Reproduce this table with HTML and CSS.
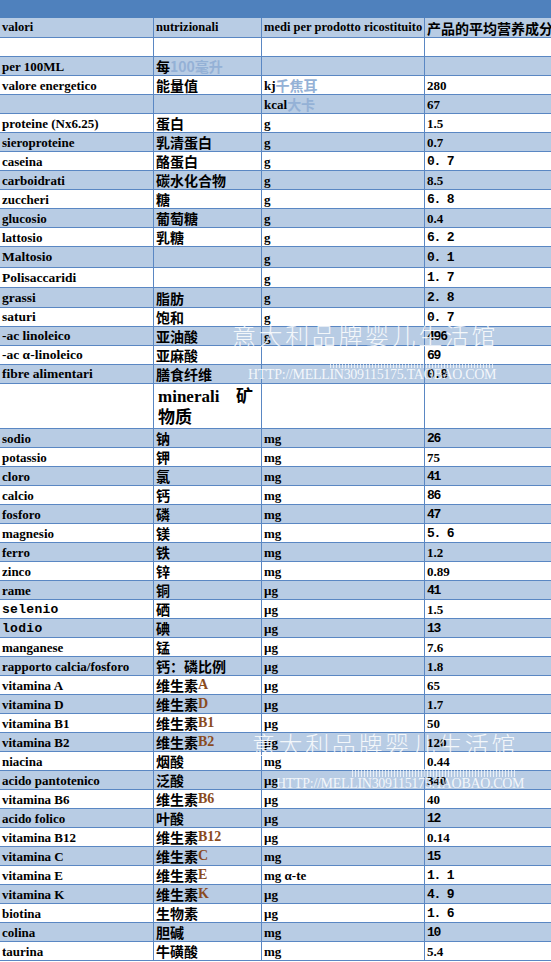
FILE: index.html
```html
<!DOCTYPE html>
<html lang="it">
<head>
<meta charset="utf-8">
<title>valori nutrizionali</title>
<link rel="stylesheet" href="styles.css">
</head>
<body>
<div class="sheet">
  <div class="band"></div>
  <div class="table">
    <div class="row blue head"><div class="c">valori</div><div class="c">nutrizionali</div><div class="c">medi per prodotto ricostituito</div><div class="c zh">产品的平均营养成分</div></div>
    <div class="row"><div class="c"></div><div class="c"></div><div class="c"></div><div class="c"></div></div>
    <div class="row blue"><div class="c">per 100ML</div><div class="c zh">每<span class="pale">100毫升</span></div><div class="c"></div><div class="c"></div></div>
    <div class="row"><div class="c">valore energetico</div><div class="c zh">能量值</div><div class="c">kj<span class="pale zh">千焦耳</span></div><div class="c">280</div></div>
    <div class="row blue"><div class="c"></div><div class="c"></div><div class="c">kcal<span class="pale zh">大卡</span></div><div class="c">67</div></div>
    <div class="row"><div class="c">proteine (Nx6.25)</div><div class="c zh">蛋白</div><div class="c">g</div><div class="c">1.5</div></div>
    <div class="row blue"><div class="c">sieroproteine</div><div class="c zh">乳清蛋白</div><div class="c">g</div><div class="c">0.7</div></div>
    <div class="row"><div class="c">caseina</div><div class="c zh">酪蛋白</div><div class="c">g</div><div class="c mono">0. 7</div></div>
    <div class="row blue"><div class="c">carboidrati</div><div class="c zh">碳水化合物</div><div class="c">g</div><div class="c">8.5</div></div>
    <div class="row"><div class="c">zuccheri</div><div class="c zh">糖</div><div class="c">g</div><div class="c mono">6. 8</div></div>
    <div class="row blue"><div class="c">glucosio</div><div class="c zh">葡萄糖</div><div class="c">g</div><div class="c">0.4</div></div>
    <div class="row"><div class="c">lattosio</div><div class="c zh">乳糖</div><div class="c">g</div><div class="c mono">6. 2</div></div>
    <div class="row blue h21"><div class="c big">Maltosio</div><div class="c"></div><div class="c low">g</div><div class="c mono">0. 1</div></div>
    <div class="row h20"><div class="c big">Polisaccaridi</div><div class="c"></div><div class="c low">g</div><div class="c mono">1. 7</div></div>
    <div class="row blue h20"><div class="c big">grassi</div><div class="c zh">脂肪</div><div class="c">g</div><div class="c mono">2. 8</div></div>
    <div class="row"><div class="c big">saturi</div><div class="c zh">饱和</div><div class="c">g</div><div class="c mono">0. 7</div></div>
    <div class="row blue"><div class="c big">-ac linoleico</div><div class="c zh">亚油酸</div><div class="c">g</div><div class="c mono">496</div></div>
    <div class="row"><div class="c big">-ac α-linoleico</div><div class="c zh">亚麻酸</div><div class="c"></div><div class="c mono">69</div></div>
    <div class="row blue"><div class="c big">fibre alimentari</div><div class="c zh">膳食纤维</div><div class="c"></div><div class="c mono">0.8</div></div>
    <div class="row h45"><div class="c"></div><div class="c minerali">minerali 矿物质</div><div class="c"></div><div class="c"></div></div>
    <div class="row blue"><div class="c">sodio</div><div class="c zh">钠</div><div class="c">mg</div><div class="c mono">26</div></div>
    <div class="row"><div class="c">potassio</div><div class="c zh">钾</div><div class="c">mg</div><div class="c">75</div></div>
    <div class="row blue"><div class="c">cloro</div><div class="c zh">氯</div><div class="c">mg</div><div class="c mono">41</div></div>
    <div class="row"><div class="c">calcio</div><div class="c zh">钙</div><div class="c">mg</div><div class="c mono">86</div></div>
    <div class="row blue"><div class="c">fosforo</div><div class="c zh">磷</div><div class="c">mg</div><div class="c mono">47</div></div>
    <div class="row"><div class="c">magnesio</div><div class="c zh">镁</div><div class="c">mg</div><div class="c mono">5. 6</div></div>
    <div class="row blue"><div class="c">ferro</div><div class="c zh">铁</div><div class="c">mg</div><div class="c">1.2</div></div>
    <div class="row"><div class="c">zinco</div><div class="c zh">锌</div><div class="c">mg</div><div class="c">0.89</div></div>
    <div class="row blue"><div class="c">rame</div><div class="c zh">铜</div><div class="c">µg</div><div class="c mono">41</div></div>
    <div class="row"><div class="c courier">selenio</div><div class="c zh">硒</div><div class="c">µg</div><div class="c">1.5</div></div>
    <div class="row blue"><div class="c courier">lodio</div><div class="c zh">碘</div><div class="c">µg</div><div class="c mono">13</div></div>
    <div class="row"><div class="c">manganese</div><div class="c zh">锰</div><div class="c">µg</div><div class="c">7.6</div></div>
    <div class="row blue"><div class="c">rapporto calcia/fosforo</div><div class="c zh">钙：磷比例</div><div class="c">µg</div><div class="c">1.8</div></div>
    <div class="row"><div class="c">vitamina A</div><div class="c zh">维生素<span class="brown">A</span></div><div class="c">µg</div><div class="c">65</div></div>
    <div class="row blue"><div class="c">vitamina D</div><div class="c zh">维生素<span class="brown">D</span></div><div class="c">µg</div><div class="c">1.7</div></div>
    <div class="row"><div class="c">vitamina B1</div><div class="c zh">维生素<span class="brown">B1</span></div><div class="c">µg</div><div class="c">50</div></div>
    <div class="row blue"><div class="c">vitamina B2</div><div class="c zh">维生素<span class="brown">B2</span></div><div class="c">µg</div><div class="c">120</div></div>
    <div class="row"><div class="c">niacina</div><div class="c zh">烟酸</div><div class="c">mg</div><div class="c">0.44</div></div>
    <div class="row blue"><div class="c">acido pantotenico</div><div class="c zh">泛酸</div><div class="c">µg</div><div class="c">340</div></div>
    <div class="row"><div class="c">vitamina B6</div><div class="c zh">维生素<span class="brown">B6</span></div><div class="c">µg</div><div class="c">40</div></div>
    <div class="row blue"><div class="c">acido folico</div><div class="c zh">叶酸</div><div class="c">µg</div><div class="c mono">12</div></div>
    <div class="row"><div class="c">vitamina B12</div><div class="c zh">维生素<span class="brown">B12</span></div><div class="c">µg</div><div class="c">0.14</div></div>
    <div class="row blue"><div class="c">vitamina C</div><div class="c zh">维生素<span class="brown">C</span></div><div class="c">mg</div><div class="c mono">15</div></div>
    <div class="row"><div class="c">vitamina E</div><div class="c zh">维生素<span class="brown">E</span></div><div class="c">mg α-te</div><div class="c mono">1. 1</div></div>
    <div class="row blue"><div class="c">vitamina K</div><div class="c zh">维生素<span class="brown">K</span></div><div class="c">µg</div><div class="c mono">4. 9</div></div>
    <div class="row"><div class="c">biotina</div><div class="c zh">生物素</div><div class="c">µg</div><div class="c mono">1. 6</div></div>
    <div class="row blue"><div class="c">colina</div><div class="c zh">胆碱</div><div class="c">mg</div><div class="c mono">10</div></div>
    <div class="row"><div class="c">taurina</div><div class="c zh">牛磺酸</div><div class="c">mg</div><div class="c">5.4</div></div>
  </div>

  <div class="wm wm1">
    <div class="wm-zh">意大利品牌婴儿生活馆</div>
    <div class="wm-bars"></div>
    <div class="wm-url">HTTP://MELLIN309115175.TAOBAO.COM</div>
  </div>
  <div class="wm wm2">
    <div class="wm-zh">意大利品牌婴儿生活馆</div>
    <div class="wm-bars"></div>
    <div class="wm-url">HTTP://MELLIN309115175.TAOBAO.COM</div>
  </div>
</div>
</body>
</html>
```

FILE: styles.css
```css
html, body {
  margin: 0;
  padding: 0;
  background: #ffffff;
}

.sheet {
  position: relative;
  width: 551px;
  height: 962px;
  overflow: hidden;
  font-family: "Liberation Serif", "Times New Roman", serif;
  font-weight: bold;
  font-size: 13px;
  color: #000;
}

.band {
  height: 18px;
  background: #4f81bd;
}

.table {
  display: flex;
  flex-direction: column;
}

.row {
  display: grid;
  grid-template-columns: 154px 108px 163px 126px;
  height: 19px;
  box-sizing: border-box;
  border-bottom: 1px solid #5a87c3;
  background: #ffffff;
}

.row.blue { background: #b8cce4; }
.row.head { height: 20px; font-size: 12.5px; }
.row.h20 { height: 20px; }
.row.h21 { height: 21px; }
.row.h45 { height: 45px; }

.c {
  box-sizing: border-box;
  border-right: 1px solid #5a87c3;
  padding-left: 2px;
  display: flex;
  align-items: center;
  white-space: nowrap;
  overflow: hidden;
  line-height: 1;
}

.c:last-child { border-right: none; }

.zh {
  font-family: "Noto Sans CJK SC", "Liberation Serif", sans-serif;
  font-size: 14px;
  font-weight: bold;
}

.head .zh { font-size: 14px; }

.pale {
  color: #94b1d6;
}

.brown {
  font-family: "Liberation Serif", serif;
  color: #8a4b1e;
  font-size: 14px;
}

.mono {
  font-family: "Liberation Mono", "Courier New", monospace;
  font-size: 13px;
  font-weight: bold;
  letter-spacing: -1.2px;
}

.courier {
  font-family: "Liberation Mono", "Courier New", monospace;
  font-size: 13px;
  letter-spacing: 0.3px;
}

.big { font-size: 13.5px; }

.low { align-items: flex-end; padding-bottom: 2px; }

.minerali {
  display: block;
  white-space: normal;
  font-family: "Liberation Serif", "Noto Sans CJK SC", serif;
  font-size: 17px;
  line-height: 21px;
  padding: 2px 8px 0 4px;
  text-align: justify;
}

/* watermark overlays */
.wm {
  position: absolute;
  color: rgba(255, 255, 255, 0.85);
  pointer-events: none;
}

.wm1 { left: 232px; top: 320px; }
.wm2 { left: 252px; top: 729px; }

.wm-zh {
  font-family: "Noto Sans CJK SC", sans-serif;
  font-weight: 300;
  font-size: 24px;
  letter-spacing: 2.6px;
  line-height: 30px;
  white-space: nowrap;
}

.wm-bars {
  margin: 10px 0 0 98px;
  width: 165px;
  height: 8px;
  background: repeating-linear-gradient(90deg, rgba(255,255,255,0.7) 0 1px, rgba(255,255,255,0) 1px 3px);
}

.wm-url {
  font-family: "Liberation Serif", serif;
  font-weight: normal;
  font-size: 14px;
  letter-spacing: -0.3px;
  margin: 0 0 0 16px;
  white-space: nowrap;
  line-height: 14px;
}

.wm2 .wm-url { margin-left: 24px; }
.wm2 .wm-bars { margin-left: 100px; }
```
